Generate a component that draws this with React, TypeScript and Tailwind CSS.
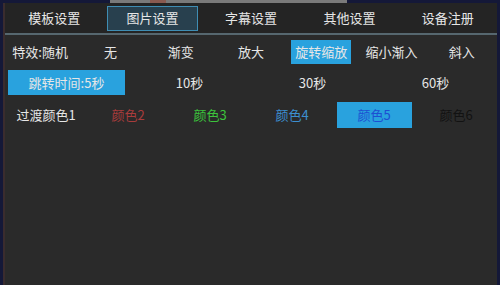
const tabs = ["模板设置", "图片设置", "字幕设置", "其他设置", "设备注册"];

const effects = ["特效:随机", "无", "渐变", "放大", "旋转缩放", "缩小渐入", "斜入"];

const times = ["跳转时间:5秒", "10秒", "30秒", "60秒"];

const colors = [
  { label: "过渡颜色1", cls: "text-[#e6e6e6]" },
  { label: "颜色2", cls: "text-[#a83c3c]" },
  { label: "颜色3", cls: "text-[#3cc43c]" },
  { label: "颜色4", cls: "text-[#3c8fd0]" },
  { label: "颜色5", cls: "text-[#1d4fd2]" },
  { label: "颜色6", cls: "text-[#121212]" },
];

export default function App() {
  return (
    <div
      className="flex h-[285px] w-[500px] flex-col overflow-hidden bg-[#141838] text-[13px] text-[#e6e6e6]"
      style={{ fontFamily: '"Noto Sans CJK SC", "Noto Sans", sans-serif' }}
    >
      {/* strip of the picture behind the dialog */}
      <div className="flex h-[3px] shrink-0">
        <div className="ml-[110px] flex w-[237px] bg-[#7a7a7a]">
          <div className="ml-[40px] w-[16px] bg-[#8a5a50]" />
        </div>
      </div>

      <div className="mx-[3px] flex flex-1 flex-col border-l-2 border-l-[#3a2c2e] bg-[#2a2a2a]">
        <div className="grid h-[30px] shrink-0 grid-cols-5 items-center bg-[#242424]">
          {tabs.map((t, i) => (
            <div key={t} className="flex justify-center">
              {i === 1 ? (
                <div className="flex h-[25px] w-[91px] items-center justify-center border border-[#3f8db3] bg-[#28404e]">
                  {t}
                </div>
              ) : (
                <span>{t}</span>
              )}
            </div>
          ))}
        </div>
        <div className="h-[2px] shrink-0 bg-[#56676f]" />

        <div className="mt-[4px] grid h-[25px] grid-cols-7 items-center">
          {effects.map((e, i) => (
            <div key={e} className="flex justify-center">
              {i === 4 ? (
                <div className="flex h-[24px] items-center bg-[#29a2de] px-[4px]">{e}</div>
              ) : (
                <span>{e}</span>
              )}
            </div>
          ))}
        </div>

        <div className="mt-[6px] grid h-[25px] grid-cols-4 items-center">
          {times.map((t, i) => (
            <div key={t} className="flex justify-center">
              {i === 0 ? (
                <div className="flex h-[25px] w-[117px] items-center justify-center bg-[#29a2de]">{t}</div>
              ) : (
                <span>{t}</span>
              )}
            </div>
          ))}
        </div>

        <div className="mt-[7px] grid h-[26px] grid-cols-6 items-center">
          {colors.map((c, i) => (
            <div key={c.label} className="flex justify-center">
              {i === 4 ? (
                <div className={`flex h-[26px] w-[75px] items-center justify-center bg-[#29a2de] ${c.cls}`}>
                  {c.label}
                </div>
              ) : (
                <span className={c.cls}>{c.label}</span>
              )}
            </div>
          ))}
        </div>
      </div>
    </div>
  );
}
